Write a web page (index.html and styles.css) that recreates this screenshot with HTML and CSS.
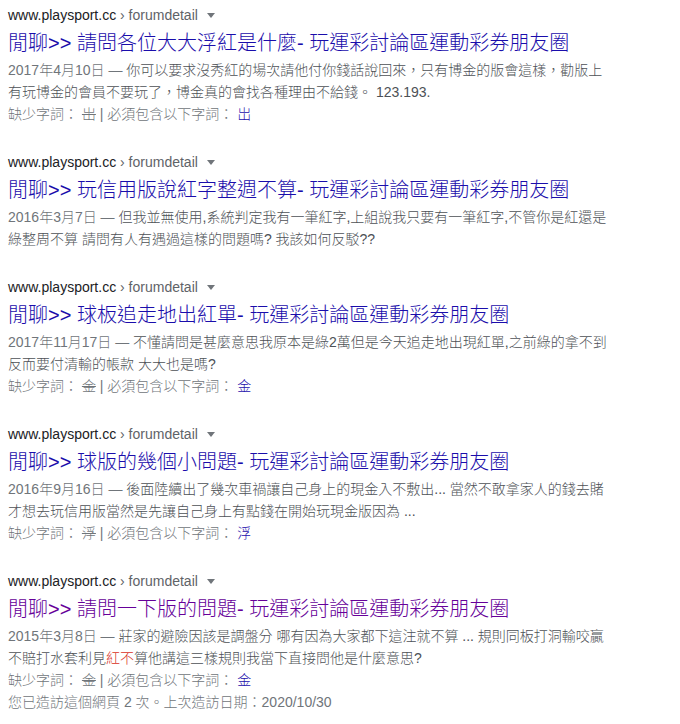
FILE: index.html
```html
<!DOCTYPE html>
<html lang="zh-Hant">
<head>
<meta charset="utf-8">
<link rel="stylesheet" href="styles.css">
</head>
<body>
<div class="results">
  <div class="result">
    <div class="url"><span class="domain">www.playsport.cc</span><span class="path"> › forumdetail</span><span class="arrow"></span></div>
    <a class="title">閒聊&gt;&gt; 請問各位大大浮紅是什麼- 玩運彩討論區運動彩券朋友圈</a>
    <div class="snippet"><span class="date">2017年4月10日 — </span>你可以要求沒秀紅的場次請他付你錢話說回來，只有博金的版會這樣，勸版上<br>有玩博金的會員不要玩了，博金真的會找各種理由不給錢。 123.193.</div>
    <div class="missing">缺少字詞： <s>岀</s> | 必須包含以下字詞： <a class="must">岀</a></div>
  </div>
  <div class="result">
    <div class="url"><span class="domain">www.playsport.cc</span><span class="path"> › forumdetail</span><span class="arrow"></span></div>
    <a class="title">閒聊&gt;&gt; 玩信用版說紅字整週不算- 玩運彩討論區運動彩券朋友圈</a>
    <div class="snippet"><span class="date">2016年3月7日 — </span>但我並無使用,系統判定我有一筆紅字,上組說我只要有一筆紅字,不管你是紅還是<br>綠整周不算 請問有人有遇過這樣的問題嗎? 我該如何反駁??</div>
  </div>
  <div class="result">
    <div class="url"><span class="domain">www.playsport.cc</span><span class="path"> › forumdetail</span><span class="arrow"></span></div>
    <a class="title">閒聊&gt;&gt; 球板追走地出紅單- 玩運彩討論區運動彩券朋友圈</a>
    <div class="snippet"><span class="date">2017年11月17日 — </span>不懂請問是甚麼意思我原本是綠2萬但是今天追走地出現紅單,之前綠的拿不到<br>反而要付清輸的帳款 大大也是嗎?</div>
    <div class="missing">缺少字詞： <s>金</s> | 必須包含以下字詞： <a class="must">金</a></div>
  </div>
  <div class="result">
    <div class="url"><span class="domain">www.playsport.cc</span><span class="path"> › forumdetail</span><span class="arrow"></span></div>
    <a class="title">閒聊&gt;&gt; 球版的幾個小問題- 玩運彩討論區運動彩券朋友圈</a>
    <div class="snippet"><span class="date">2016年9月16日 — </span>後面陸續出了幾次車禍讓自己身上的現金入不敷出... 當然不敢拿家人的錢去賭<br>才想去玩信用版當然是先讓自己身上有點錢在開始玩現金版因為 ...</div>
    <div class="missing">缺少字詞： <s>浮</s> | 必須包含以下字詞： <a class="must">浮</a></div>
  </div>
  <div class="result">
    <div class="url"><span class="domain">www.playsport.cc</span><span class="path"> › forumdetail</span><span class="arrow"></span></div>
    <a class="title visited">閒聊&gt;&gt; 請問一下版的問題- 玩運彩討論區運動彩券朋友圈</a>
    <div class="snippet"><span class="date">2015年3月8日 — </span>莊家的避險因該是調盤分 哪有因為大家都下這注就不算 ... 規則同板打洞輸咬贏<br>不賠打水套利見<em class="hl">紅不</em>算他講這三樣規則我當下直接問他是什麼意思?</div>
    <div class="missing">缺少字詞： <s>金</s> | 必須包含以下字詞： <a class="must">金</a></div>
    <div class="missing">您已造訪這個網頁 2 次。上次造訪日期：2020/10/30</div>
  </div>
</div>
</body>
</html>
```

FILE: styles.css
```css
html, body {
  margin: 0;
  padding: 0;
  background: #ffffff;
}

body {
  font-family: "Liberation Sans", Arial, "Noto Sans CJK TC", sans-serif;
  font-weight: 300;
  color: #4d5156;
}

.results {
  padding: 5px 0 0 8px;
  display: flex;
  flex-direction: column;
  gap: 27px;
}

.result {
  display: flex;
  flex-direction: column;
}

.url {
  font-size: 14px;
  line-height: 20px;
  height: 20px;
  display: flex;
  align-items: center;
  white-space: nowrap;
}

.domain {
  color: #202124;
}

.path {
  color: #5f6368;
  white-space: pre;
}

.arrow {
  width: 0;
  height: 0;
  margin-left: 9px;
  margin-top: 1px;
  border-left: 4px solid transparent;
  border-right: 4px solid transparent;
  border-top: 5px solid #70757a;
}

.title {
  display: block;
  margin-top: 5px;
  font-size: 20px;
  line-height: 26px;
  color: #1a0dab;
  white-space: nowrap;
}

.title.visited {
  color: #660099;
}

.snippet {
  margin-top: 3px;
  font-size: 14px;
  line-height: 22px;
  color: #4d5156;
  width: 640px;
}

.date {
  color: #70757a;
}

.hl {
  font-style: normal;
  color: #d93025;
}

.missing {
  font-size: 14px;
  line-height: 22px;
  color: #70757a;
}

.missing s {
  text-decoration: line-through;
}

.must {
  color: #1a0dab;
}
```
